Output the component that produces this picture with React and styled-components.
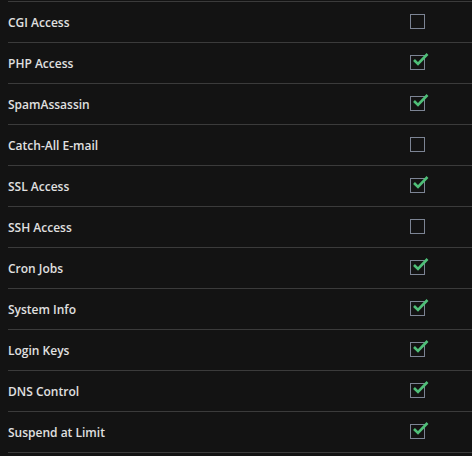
import React from "react";
import styled, { createGlobalStyle } from "styled-components";

const Global = createGlobalStyle`
  html, body { margin: 0; padding: 0; background: #131313; }
  body { font-family: "Open Sans", "Noto Sans", sans-serif; }
`;

const List = styled.div`
  padding-top: 1px;
  margin-left: 8px;
  display: flex;
  flex-direction: column;
`;

const Row = styled.div`
  display: grid;
  grid-template-columns: 1fr 62px;
  align-items: center;
  height: 40px;
  border-top: 1px solid #3b3b3b;
  &:last-child { border-bottom: 1px solid #3b3b3b; }
`;

const Label = styled.span`
  color: #e0e0e0;
  font-size: 12px;
  font-weight: 600;
  margin-top: 0;
`;

const Box = styled.span`
  position: relative;
  box-sizing: border-box;
  width: 15px;
  height: 15px;
  border: 1px solid #7c8494;
  margin-top: -2px;
`;

const Check = styled.svg`
  position: absolute;
  left: 1px;
  top: -4px;
  width: 17px;
  height: 15px;
  overflow: visible;
`;

const items = [
  ["CGI Access", false],
  ["PHP Access", true],
  ["SpamAssassin", true],
  ["Catch-All E-mail", false],
  ["SSL Access", true],
  ["SSH Access", false],
  ["Cron Jobs", true],
  ["System Info", true],
  ["Login Keys", true],
  ["DNS Control", true],
  ["Suspend at Limit", true],
];

export default function App() {
  return (
    <>
      <Global />
      <List>
        {items.map(([name, on]) => (
          <Row key={name}>
            <Label>{name}</Label>
            <Box>
              {on && (
                <Check viewBox="0 0 17 15">
                  <path d="M2 8 L6 12 L15.5 2" fill="none" stroke="#4fbf78" strokeWidth="2.6" strokeLinecap="butt" strokeLinejoin="miter" />
                </Check>
              )}
            </Box>
          </Row>
        ))}
      </List>
    </>
  );
}
